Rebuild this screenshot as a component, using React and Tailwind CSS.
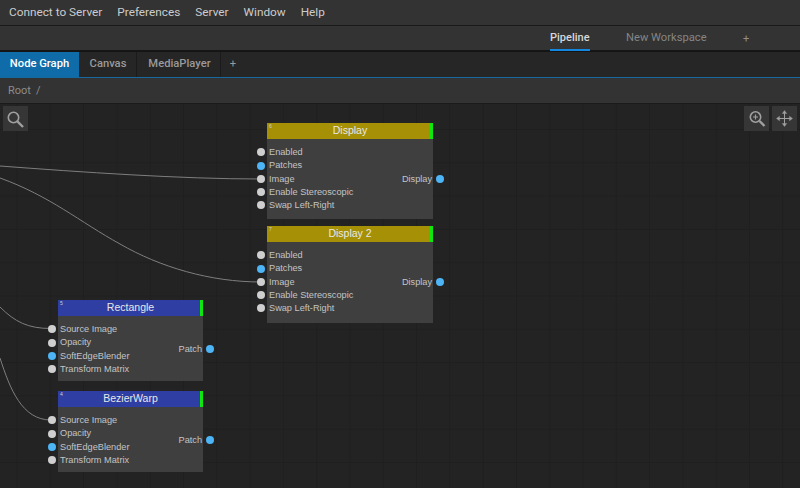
const blue = "bg-[#4db4f5]"
const gray = "bg-[#cfcfcf]"

function Node({ x, y, h, width, id, title, color, inputs, output, outY }) {
  return (
    <div className="absolute bg-[#3f3f3f] font-['Liberation_Sans',sans-serif]" style={{ left: x, top: y, width, height: h }}>
      <div className={`relative h-4 flex items-center justify-center text-[10.5px] text-[#e8e8e8] ${color}`}>
        <span className="absolute left-0.5 top-0 text-[5px] leading-[7px] text-[#cfcfcf]">{id}</span>
        {title}
        <span className="absolute right-0 top-0 h-4 w-[3px] bg-[#0fe80f]" />
      </div>
      <div className="relative pt-[7px]">
        {inputs.map(([name, c]) => (
          <div key={name} className="relative h-[13.2px] flex items-center pl-0.5 pt-px text-[9.2px] text-[#c4c4c4]">
            <span className={`absolute left-[-10px] top-[2.4px] h-2 w-2 rounded-full ${c}`} />
            {name}
          </div>
        ))}
        <div className="absolute right-0 h-[13px] flex items-center pr-px text-[9.2px] text-[#c4c4c4]" style={{ top: outY }}>
          {output}
          <span className={`absolute right-[-11px] top-[2.4px] h-2 w-2 rounded-full ${blue}`} />
        </div>
      </div>
    </div>
  )
}

const displayInputs = [
  ["Enabled", gray],
  ["Patches", blue],
  ["Image", gray],
  ["Enable Stereoscopic", gray],
  ["Swap Left-Right", gray],
]

const patchInputs = [
  ["Source Image", gray],
  ["Opacity", gray],
  ["SoftEdgeBlender", blue],
  ["Transform Matrix", gray],
]

export default function App() {
  return (
    <div className="w-[800px] h-[488px] flex flex-col overflow-hidden bg-[#232323] font-['Roboto',sans-serif]">
      <div className="h-[26px] flex items-center gap-[15px] pl-[9px] pt-px bg-[#333333] border-b border-[#1a1a1a] text-[11.8px] text-[#cccccc] shrink-0">
        <span>Connect to Server</span>
        <span>Preferences</span>
        <span>Server</span>
        <span>Window</span>
        <span>Help</span>
      </div>
      <div className="h-[26px] relative bg-[#333333] border-b-2 border-[#151515] text-[11px] shrink-0">
        <span className="absolute left-[550px] top-[4px] h-[21px] font-medium text-[#d8d8d8] border-b-2 border-[#1488e0]">Pipeline</span>
        <span className="absolute left-[626px] top-[4px] text-[11.2px] text-[#858585]">New Workspace</span>
        <span className="absolute left-[743px] top-[5px] text-[#8f8f8f]">+</span>
      </div>
      <div className="h-[26px] flex bg-[#262626] border-b border-[#14699f] text-[11.2px] font-medium text-[#9a9a9a] shrink-0">
        <div className="w-[79px] flex items-center justify-center bg-[#0f6ca8] text-white">Node Graph</div>
        <div className="w-[58px] flex items-center justify-center pl-px border-r border-[#1b1b1b]">Canvas</div>
        <div className="w-[84px] flex items-center justify-center pl-0.5 border-r border-[#1b1b1b]">MediaPlayer</div>
        <div className="w-[24px] flex items-center justify-center font-normal">+</div>
      </div>
      <div className="h-[26px] flex items-center gap-[5px] pl-2 pt-0.5 bg-[#333333] border-b border-[#1a1a1a] text-[11px] text-[#8c8c8c] shrink-0">
        <span>Root</span>
        <span>/</span>
      </div>
      <div className="relative flex-1 bg-[#232323] bg-[linear-gradient(#1f1f1f_1px,transparent_1px),linear-gradient(90deg,#1f1f1f_1px,transparent_1px)] bg-[size:33.3px_33.3px] bg-[position:16.5px_25px]">
        <svg className="absolute left-0 top-0" width="800" height="384" fill="none" stroke="#7e7e7e" strokeWidth="1">
          <path d="M0 62 C 80 68, 180 75, 261 75" />
          <path d="M0 74 C 50 92, 80 118, 120 140 C 160 163, 210 178, 261 178" />
          <path d="M0 203 C 15 218, 28 224.5, 51 224.5" />
          <path d="M0 254 C 10 285, 22 316, 51 316" />
        </svg>
        <div className="absolute left-[3px] top-[2px] w-[25px] h-[25px] bg-[#363636]">
          <svg width="25" height="25" viewBox="0 0 25 25" fill="none" stroke="#a0a0a0" strokeWidth="1.6">
            <circle cx="10.5" cy="11.5" r="5.2" />
            <path d="M14.5 15.5 L20 21" strokeWidth="2.4" />
          </svg>
        </div>
        <div className="absolute left-[744px] top-[2px] w-[25px] h-[25px] bg-[#363636]">
          <svg width="25" height="25" viewBox="0 0 25 25" fill="none" stroke="#a0a0a0" strokeWidth="1.6">
            <circle cx="11.5" cy="11" r="5.2" />
            <path d="M15.5 15 L20.5 20" strokeWidth="2.4" />
            <path d="M9 11 H14 M11.5 8.5 V13.5" strokeWidth="1.2" />
          </svg>
        </div>
        <div className="absolute left-[772px] top-[2px] w-[25px] h-[25px] bg-[#363636]">
          <svg width="25" height="25" viewBox="0 0 25 25" fill="#a0a0a0" stroke="#a0a0a0" strokeWidth="1">
            <path d="M12.5 6 V19 M6 12.5 H19" />
            <path d="M12.5 4.5 L10.3 7.5 H14.7 Z M12.5 20.5 L10.3 17.5 H14.7 Z M4.5 12.5 L7.5 10.3 V14.7 Z M20.5 12.5 L17.5 10.3 V14.7 Z" strokeWidth="0.4" />
          </svg>
        </div>
        <Node x={267} y={19} width={166} h={96} id="6" title="Display" color="bg-[#a59006]" inputs={displayInputs} output="Display" outY={34} />
        <Node x={267} y={122} width={166} h={97} id="7" title="Display 2" color="bg-[#a59006]" inputs={displayInputs} output="Display" outY={34} />
        <Node x={58} y={196} width={145} h={81} id="5" title="Rectangle" color="bg-[#2f3ea3]" inputs={patchInputs} output="Patch" outY={27} />
        <Node x={58} y={287} width={145} h={81} id="4" title="BezierWarp" color="bg-[#2f3ea3]" inputs={patchInputs} output="Patch" outY={27} />
      </div>
    </div>
  )
}
